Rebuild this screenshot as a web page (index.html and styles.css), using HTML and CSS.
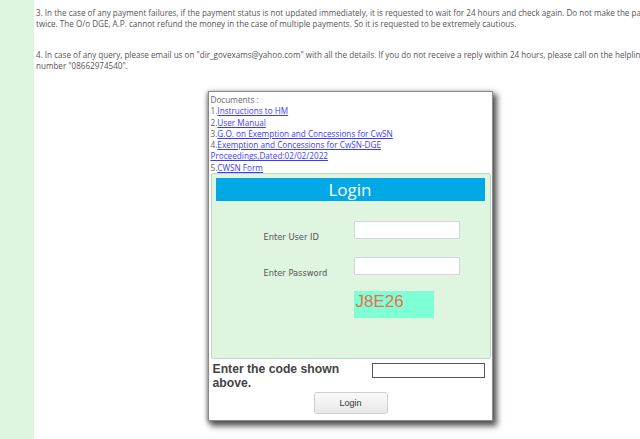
FILE: index.html
```html
<!DOCTYPE html>
<html>
<head>
<meta charset="utf-8">
<link rel="stylesheet" href="styles.css">
</head>
<body>
<div class="page">
  <div class="strip"></div>
  <div class="content">
    <p class="note">3. In the case of any payment failures, if the payment status is not updated immediately, it is requested to wait for 24 hours and check again. Do not make the payment<br>twice. The O/o DGE, A.P. cannot refund the money in the case of multiple payments. So it is requested to be extremely cautious.</p>
    <p class="note">4. In case of any query, please email us on "dir_govexams@yahoo.com" with all the details. If you do not receive a reply within 24 hours, please call on the helpline<br>number "08662974540".</p>
    <div class="box">
      <div class="docs">
        Documents :<br>
        1.<a href="#">Instructions to HM</a><br>
        2.<a href="#">User Manual</a><br>
        3.<a href="#">G.O. on Exemption and Concessions for CwSN</a><br>
        4.<a href="#">Exemption and Concessions for CwSN-DGE<br>Proceedings,Dated:02/02/2022</a><br>
        5.<a href="#">CWSN Form</a>
      </div>
      <div class="panel">
        <div class="head">Login</div>
        <div class="form">
          <div class="row">
            <span class="label">Enter User ID</span>
            <span class="field"></span>
          </div>
          <div class="row">
            <span class="label">Enter Password</span>
            <span class="field"></span>
          </div>
          <div class="row">
            <span class="label"></span>
            <span class="captcha">J8E26</span>
          </div>
        </div>
      </div>
      <div class="code">
        <span class="codelabel">Enter the code shown above.</span>
        <span class="codefield"></span>
      </div>
      <div class="btnrow"><span class="btn">Login</span></div>
    </div>
  </div>
</div>
</body>
</html>
```
FILE: styles.css
```css
html, body {
  margin: 0;
  padding: 0;
  background: #fff;
  overflow: hidden;
}
.page {
  display: flex;
  min-height: 439px;
  width: 700px;
}
.strip {
  width: 34px;
  flex: none;
  background: #e0f5df;
}
.content {
  width: 630px;
  padding-left: 2px;
  padding-top: 7px;
  font-family: "Open Sans", sans-serif;
}
.note {
  margin: 0 0 20px 0;
  font-size: 8.1px;
  line-height: 11px;
  color: #555;
  white-space: nowrap;
}
.box {
  width: 280px;
  margin: 0 auto;
  border: 1px solid #8a8a8a;
  background: #fff;
  box-shadow: 3px 4px 6px 1px #555, -1px 1px 4px #999;
  padding: 2px 1px 6px 2px;
  position: relative;
  left: -1px;
}
.docs {
  font-size: 8.2px;
  line-height: 11.3px;
  color: #666;
  white-space: nowrap;
}
.docs a {
  color: #3b3bff;
  text-decoration: underline;
}
.panel {
  margin-top: 0;
  background: #dff5df;
  border: 1px solid #b9d8c6;
  border-radius: 2px;
  padding: 4px 5px 0 4px;
  height: 180px;
}
.head {
  background: #00a9e6;
  color: #fff;
  text-align: center;
  font-size: 17px;
  line-height: 23px;
  height: 23px;
}
.form {
  padding-top: 20px;
}
.row {
  display: flex;
  align-items: flex-end;
  margin-bottom: 18px;
}
.label {
  width: 90px;
  margin-left: 48px;
  font-family: "DejaVu Sans", sans-serif;
  font-size: 8.3px;
  color: #555;
  line-height: 10px;
  margin-bottom: -3px;
}
.field {
  width: 104px;
  height: 16px;
  background: #fff;
  border: 1px solid #d6d6d6;
}
.captcha {
  width: 80px;
  height: 27px;
  margin-top: -2px;
  background: #7fffd4;
  color: #f26a4f;
  font-family: "Liberation Sans", sans-serif;
  font-size: 17px;
  line-height: 22px;
  padding-left: 2px;
  box-sizing: border-box;
}
.code {
  display: flex;
  align-items: flex-start;
  margin-top: 3px;
  padding-left: 2px;
}
.codelabel {
  width: 150px;
  font-family: "Liberation Sans", sans-serif;
  font-weight: bold;
  font-size: 12.2px;
  line-height: 14px;
  color: #444;
}
.codefield {
  width: 111px;
  height: 13px;
  margin-left: 9px;
  margin-top: 1px;
  border: 1px solid #555;
  background: #fff;
}
.btnrow {
  display: flex;
  justify-content: center;
  margin-top: 2px;
}
.btn {
  width: 72px;
  height: 20px;
  border: 1px solid #cfcfcf;
  border-radius: 3px;
  background: linear-gradient(#fafafa, #e8e8e8);
  font-family: "Liberation Sans", sans-serif;
  font-size: 9px;
  line-height: 20px;
  text-align: center;
  color: #333;
}
```
